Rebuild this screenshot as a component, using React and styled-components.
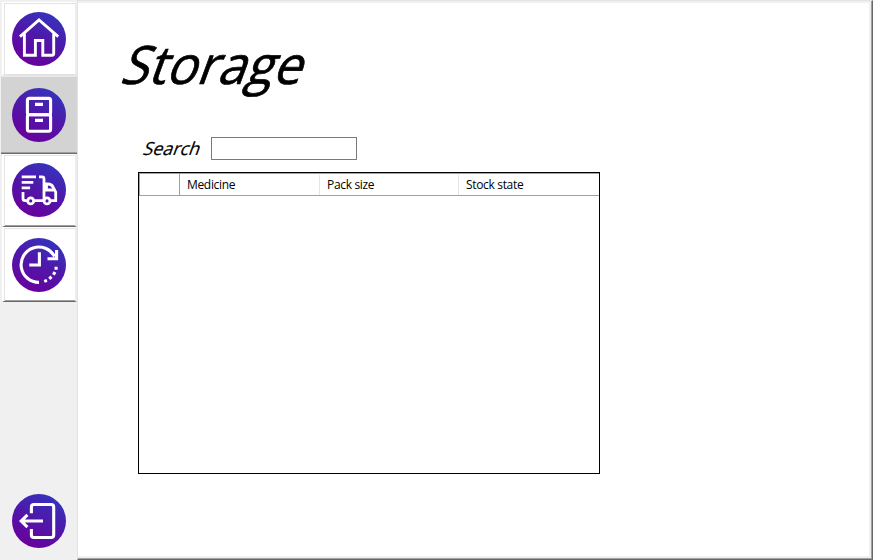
import React from 'react';
import styled, { createGlobalStyle, css } from 'styled-components';

const GlobalStyle = createGlobalStyle`
  * { box-sizing: border-box; }
  body { margin: 0; background: #f0f0f0; font-family: "Open Sans", "Noto Sans", sans-serif; color: #000; overflow: hidden; }
`;

const Window = styled.div`
  display: flex;
  width: 873px;
  height: 560px;
  background: #f0f0f0;
`;

const Sidebar = styled.nav`
  display: flex;
  flex-direction: column;
  width: 77px;
  padding-top: 2px;
`;

const NavButton = styled.button`
  display: flex;
  align-items: flex-start;
  justify-content: flex-start;
  flex: none;
  width: 75px;
  height: ${(p) => p.$height}px;
  margin: 0 0 0 2px;
  padding: ${(p) => p.$top}px 0 0 8px;
  border: 1px solid #fff;
  border-left-width: 2px;
  border-right: 2px solid #ececec;
  border-bottom: ${(p) => (p.$soft ? '2px solid #e3e3e3' : '1px solid #696969')};
  background: #fff;
  outline: 0;
  box-shadow: inset 1px 1px #e3e3e3${(p) => (p.$soft ? '' : ', inset 0 -1px #a0a0a0')};
  ${(p) => p.$active && css`
    width: 77px;
    margin-left: 1px;
    margin-right: -1px;
    padding-left: 11px;
    border: 0;
    border-top: 1px solid #e9e9e9;
    border-bottom: 1px solid #696969;
    background: #d3d3d3;
    box-shadow: inset 0 -1px #a0a0a0;
  `}
`;

const ExitButton = styled.button`
  display: flex;
  margin: auto 0 12px 12px;
  padding: 0;
  border: 0;
  background: none;
`;

const Disc = styled.svg`
  display: block;
  flex: none;
  width: 54px;
  height: 54px;
  fill: none;
  stroke: #fff;
  stroke-width: 3.1;
`;

const Page = styled.main`
  flex: 1;
  display: flex;
  flex-direction: column;
  align-items: flex-start;
  background: #fff;
  border: 1px solid;
  border-color: #e3e3e3 #696969 #696969 #e3e3e3;
  box-shadow: inset -1px -1px #a0a0a0, inset -3px -3px #f0f0f0, inset 0 2px #f0f0f0;
`;

const Title = styled.h1`
  margin: 23px 0 0 41px;
  height: 80px;
  font-size: 53px;
  line-height: 80px;
  font-weight: 400;
  white-space: nowrap;
  -webkit-text-stroke: 0.7px #000;
  transform-origin: 0 60px;
  transform: skewX(-20deg) scaleX(0.955);
`;

const SearchRow = styled.label`
  display: flex;
  align-items: center;
  height: 23px;
  margin: 33px 0 0 64px;
`;

const SearchLabel = styled.span`
  width: 69px;
  font-size: 18px;
  line-height: 23px;
  -webkit-text-stroke: 0.2px #000;
  transform-origin: 0 18px;
  transform: skewX(-20deg) scaleX(0.99);
`;

const SearchInput = styled.input`
  width: 146px;
  height: 23px;
  padding: 2px 4px;
  border: 1px solid #7a7a7a;
  border-radius: 0;
  background: #fff;
  outline: 0;
`;

const Grid = styled.div`
  width: 462px;
  height: 302px;
  margin: 12px 0 0 60px;
  border: 1px solid #000;
  background: #fff;
`;

const GridHeader = styled.div`
  display: grid;
  grid-template-columns: 40px 140px 139px 1fr;
  height: 23px;
  border: 1px solid #a0a0a0;
  border-right: 0;
`;

const HeaderCell = styled.div`
  margin-top: ${(p) => (p.$corner ? 0 : 1)}px;
  padding-left: 7px;
  border-right: 1px solid ${(p) => (p.$corner ? '#a0a0a0' : p.$last ? '#fff' : '#e5e5e5')};
  font-size: 12px;
  line-height: 19px;
  white-space: nowrap;
  letter-spacing: -0.33px;
`;

const Icon = ({ id, children }) => (
  <Disc viewBox="0 0 54 54">
    <defs>
      <linearGradient id={id} x1="0.8" y1="0.05" x2="0.35" y2="0.95">
        <stop offset="0" stopColor="#3434bc" />
        <stop offset="0.5" stopColor="#4f18aa" />
        <stop offset="1" stopColor="#66029e" />
      </linearGradient>
    </defs>
    <circle cx="27" cy="27" r="27" fill={`url(#${id})`} stroke="none" />
    {children}
  </Disc>
);

const HomeIcon = () => (
  <Icon id="home">
    <path d="M8 24.7 27 8 46.2 24.7M12.4 21v22.3h11V28.5h7.4v14.8H40q1.7 0 1.7-1.7V21" strokeWidth="2.9" />
  </Icon>
);
const CabinetIcon = () => (
  <Icon id="cabinet">
    <rect x="15.4" y="10.4" width="23.2" height="16.3" rx="2" />
    <rect x="15.4" y="26.7" width="23.2" height="16.6" rx="2" />
    <path d="M23 16.4h8M23 32.4h8" />
  </Icon>
);
const TruckIcon = () => (
  <Icon id="truck">
    <path d="M9.7 13.9H24M9.7 19.4h11.6M9.7 24.8h8.4M27 13.9h3q2 0 2 2v21.8M11 29v6.5q0 2.2 2.2 2.2h2M22 37.7h10M32 21h4q3.5 0 5 3l2.7 5v8.7h-5.3M34.5 21v6h9" strokeWidth="2.8" />
    <circle cx="18.7" cy="37.9" r="3" strokeWidth="2.8" />
    <circle cx="35" cy="37.9" r="3" strokeWidth="2.8" />
  </Icon>
);
const HistoryIcon = () => (
  <Icon id="history">
    <path d="M27 44.4A17.7 17.7 0 1 1 42.5 18.5M35.5 20.7H44.6V12M27.4 14.3V27H17.3" />
    <path d="M44.1 28.8v3M42.9 34l-1.5 2.7M39.5 38.7l-2.2 2.1M35 42.4l-2.8 1" />
  </Icon>
);
const ExitIcon = () => (
  <Icon id="exit">
    <path d="M19.4 19.2V13q0-2.5 2.5-2.5h17.3q2.5 0 2.5 2.5v28q0 2.5-2.5 2.5H21.9q-2.5 0-2.5-2.5v-6M31 27H9.5M15.4 20.8 9.2 27l6.2 6.2" />
  </Icon>
);

export default function App() {
  return (
    <>
      <GlobalStyle />
      <Window>
        <Sidebar>
          <NavButton $height={74} $top={9} $soft aria-label="Home"><HomeIcon /></NavButton>
          <NavButton $height={78} $top={11} $active aria-label="Storage"><CabinetIcon /></NavButton>
          <NavButton $height={73} $top={8} aria-label="Deliveries"><TruckIcon /></NavButton>
          <NavButton $height={75} $top={10} aria-label="History"><HistoryIcon /></NavButton>
          <ExitButton aria-label="Exit"><ExitIcon /></ExitButton>
        </Sidebar>
        <Page>
          <Title>Storage</Title>
          <SearchRow>
            <SearchLabel>Search</SearchLabel>
            <SearchInput />
          </SearchRow>
          <Grid>
            <GridHeader>
              <HeaderCell $corner />
              <HeaderCell>Medicine</HeaderCell>
              <HeaderCell>Pack size</HeaderCell>
              <HeaderCell $last>Stock state</HeaderCell>
            </GridHeader>
          </Grid>
        </Page>
      </Window>
    </>
  );
}
